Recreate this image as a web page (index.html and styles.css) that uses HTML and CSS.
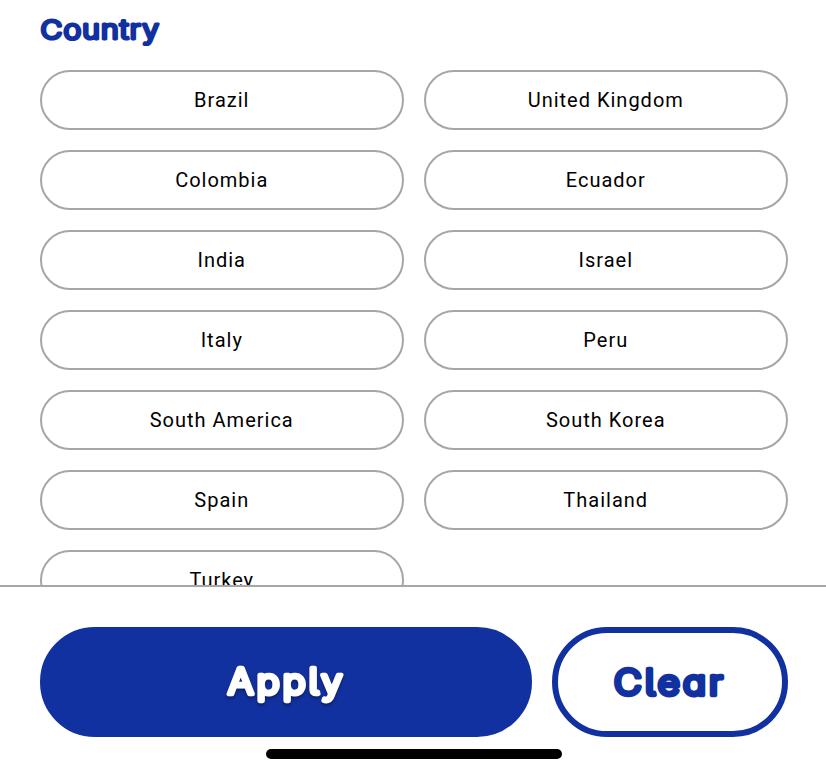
FILE: index.html
```
<!DOCTYPE html>
<html lang="en">
<head>
<meta charset="utf-8">
<title>Country filter</title>
<link rel="stylesheet" href="styles.css">
</head>
<body>
<main class="filters">
<h2 class="heading"><svg class="lettering heading-text" width="130" height="40"><text x="0.5" y="28.5" textLength="119.5" lengthAdjust="spacingAndGlyphs">Country</text></svg></h2>
<div class="options">
<button class="option">Brazil</button>
<button class="option">United Kingdom</button>
<button class="option">Colombia</button>
<button class="option">Ecuador</button>
<button class="option">India</button>
<button class="option">Israel</button>
<button class="option">Italy</button>
<button class="option">Peru</button>
<button class="option">South America</button>
<button class="option">South Korea</button>
<button class="option">Spain</button>
<button class="option">Thailand</button>
<button class="option">Turkey</button>
</div>
</main>
<footer class="footer">
<div class="actions">
<button class="action apply"><svg class="lettering" width="140" height="60"><text x="12" y="42" textLength="117.5" lengthAdjust="spacingAndGlyphs">Apply</text></svg></button>
<button class="action clear"><svg class="lettering" width="140" height="60"><text x="14" y="43" textLength="112" lengthAdjust="spacingAndGlyphs">Clear</text></svg></button>
</div>
<div class="home-indicator"></div>
</footer>
</body>
</html>
```
FILE: styles.css
```
* { box-sizing: border-box; }
body {
  margin: 0;
  height: 773px;
  overflow: hidden;
  display: flex;
  flex-direction: column;
  background: #fff;
  font-family: Roboto, sans-serif;
}
.filters {
  height: 585px;
  flex: none;
  overflow: hidden;
  padding: 10px 38px 0 40px;
}
.heading {
  margin: 0 0 20px;
  height: 40px;
  color: #1231a0;
}
.lettering {
  display: block;
  overflow: visible;
  font-family: Inter, sans-serif;
  font-size: 35px;
  font-weight: 300;
  letter-spacing: 3px;
  font-feature-settings: "cv11" 1, "cv05" 1;
  fill: currentColor;
  stroke: currentColor;
  stroke-width: 4.6px;
  stroke-linejoin: round;
}
.heading-text {
  font-size: 26px;
  letter-spacing: 1px;
  stroke-width: 3.1px;
}
.options {
  display: grid;
  grid-template-columns: 1fr 1fr;
  grid-auto-rows: 60px;
  gap: 20px;
}
.option {
  padding: 0 0.5px 0 0;
  border: 2px solid #a6a6a8;
  border-radius: 30px;
  background: #fff;
  color: #000;
  font: 400 20px/24px Roboto, sans-serif;
  letter-spacing: 1px;
}
.footer {
  flex: 1;
  border-top: 2px solid #a6a6a8;
  padding: 40px 38px 0 40px;
}
.actions {
  display: grid;
  grid-template-columns: 492px 236px;
  gap: 20px;
  height: 110px;
}
.action {
  display: flex;
  align-items: center;
  justify-content: center;
  padding: 0;
  border: 6px solid #1231a0;
  border-radius: 55px;
}
.apply {
  background: #1231a0;
  color: #fff;
}
.apply .lettering {
  filter: drop-shadow(0 2px 1.5px rgba(0, 0, 0, .4));
}
.clear {
  background: #fff;
  color: #1231a0;
}
.home-indicator {
  width: 296px;
  height: 10px;
  margin: 12px 0 0 226px;
  border-radius: 5px;
  background: #000;
}
```
